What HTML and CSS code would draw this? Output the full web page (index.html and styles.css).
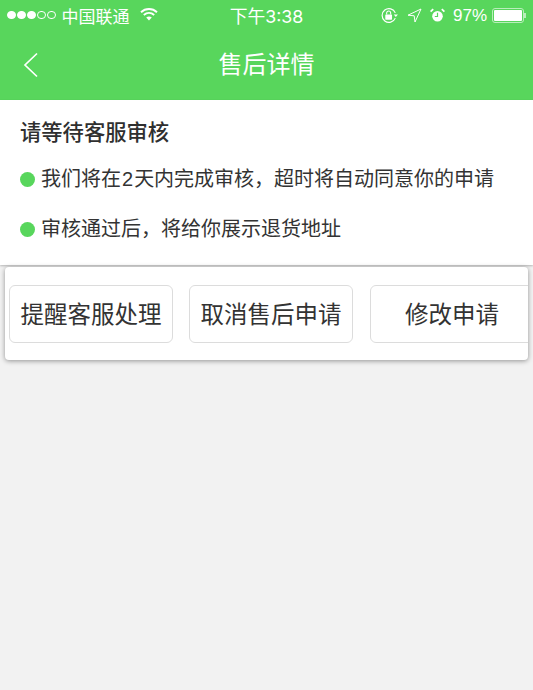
FILE: index.html
```html
<!DOCTYPE html>
<html lang="zh-CN">
<head>
<meta charset="utf-8">
<title>售后详情</title>
<link rel="stylesheet" href="styles.css">
</head>
<body>
<header class="top">
  <div class="status">
    <div class="status-left">
      <span class="dots"><i class="dot on"></i><i class="dot on"></i><i class="dot on"></i><i class="dot"></i><i class="dot"></i></span>
      <span class="carrier">中国联通</span>
      <svg class="wifi" width="18" height="14" viewBox="0 0 18 14"><path d="M1 5.200C5.600.9 12.400.9 17 5.200" fill="none" stroke="#fff" stroke-width="1.900"/><path d="M3.800 8C6.900 5.300 11.100 5.300 14.200 8" fill="none" stroke="#fff" stroke-width="1.900"/><path d="M6.200 10.500C7.900 9 10.100 9 11.800 10.500L9 13.500Z" fill="#fff"/></svg>
    </div>
    <div class="clock">下午3:38</div>
    <div class="status-right">
      <svg class="ic-lock" width="19" height="17" viewBox="0 0 18 16"><path d="M14.500 10.500A6.500 6.500 0 1 1 14.500 5.500" fill="none" stroke="#fff" stroke-width="1.100"/><path d="M13 7h4l-2 2.500z" fill="#fff"/><rect x="5" y="7" width="6.400" height="5" rx=".6" fill="#fff"/><path d="M6.300 7V5.600a1.900 1.900 0 0 1 3.800 0V7" fill="none" stroke="#fff" stroke-width="1"/></svg>
      <svg class="ic-loc" width="15" height="15" viewBox="0 0 15 15"><path d="M14 1 1 7.200l6.200.6.800 6.200z" fill="none" stroke="#fff" stroke-width="1" stroke-linejoin="round"/></svg>
      <svg class="ic-alarm" width="15" height="15" viewBox="0 0 15 15"><circle cx="7.500" cy="8.200" r="5.300" fill="#fff"/><path d="M7.500 4.800v3.700H4.800" fill="none" stroke="#58d65c" stroke-width="1.200"/><path d="M.6 3.600 3.200 1.200 M14.400 3.600 11.800 1.200" stroke="#fff" stroke-width="1.800"/></svg>
      <span class="pct">97%</span>
      <span class="battery"><span class="battery-fill"></span></span>
      <span class="battery-cap"></span>
    </div>
  </div>
  <nav class="nav">
    <svg class="back" width="16" height="26" viewBox="0 0 16 26"><path d="M14 1.500 2 13l12 11.500" fill="none" stroke="#fff" stroke-width="1.700"/></svg>
    <h1 class="nav-title">售后详情</h1>
  </nav>
</header>
<section class="info">
  <h2 class="info-title">请等待客服审核</h2>
  <p class="info-row"><i class="bullet"></i>我们将在<span class="num">2</span>天内完成审核，超时将自动同意你的申请</p>
  <p class="info-row"><i class="bullet"></i>审核通过后，将给你展示退货地址</p>
</section>
<section class="actions">
  <div class="action-track">
    <button class="btn">提醒客服处理</button>
    <button class="btn">取消售后申请</button>
    <button class="btn btn-last">修改申请</button>
  </div>
</section>
</body>
</html>
```

FILE: styles.css
```css
* { box-sizing: border-box; }
html, body { margin: 0; padding: 0; }
body {
  width: 533px;
  height: 690px;
  overflow: hidden;
  background: #f2f2f2;
  font-family: "Liberation Sans", "Noto Sans CJK SC", sans-serif;
  color: #333;
}
.top { background: #58d65c; color: #fff; height: 100px; }
.status {
  height: 30px;
  display: grid;
  grid-template-columns: 1fr auto 1fr;
  align-items: center;
  padding: 0 7px;
}
.status-left, .status-right { display: flex; align-items: center; }
.status-right { justify-content: flex-end; }
.dots { display: flex; gap: 1.500px; margin-right: 6px; }
.dot { width: 8.500px; height: 8.500px; border-radius: 50%; border: 1px solid #fff; }
.dot.on { background: #fff; }
.carrier { font-size: 17px; }
.wifi { margin: 0 0 2px 10px; }
.clock { font-family: Inter, "Noto Sans CJK SC", sans-serif; font-size: 17.800px; }
.ic-lock { margin-right: 8px; }
.ic-loc { margin-right: 8px; }
.ic-alarm { margin-right: 8px; }
.pct { font-size: 17px; margin-right: 5px; padding-top: 2px; }
.battery {
  width: 32px;
  height: 15px;
  border: 1px solid #b9eebb;
  border-radius: 3px;
  padding: 1px;
  display: block;
}
.battery-fill { display: block; height: 100%; background: #fff; border-radius: 1px; }
.battery-cap { width: 2px; height: 5px; background: #b9eebb; }
.nav { height: 70px; display: flex; align-items: center; justify-content: center; position: relative; }
.back { position: absolute; left: 23px; top: 22px; }
.nav-title { margin: 0; padding-bottom: 6px; font-size: 24px; font-weight: 400; }
.info { background: #fff; height: 165px; padding: 19px 20px 0; box-shadow: 0 1px 2px rgba(0,0,0,.25); }
.info-title { margin: 0 0 18px; font-size: 21.300px; line-height: 28px; font-weight: 500; color: #2f2f2f; }
.info-row { margin: 0 0 22px; display: flex; align-items: center; font-size: 20px; line-height: 28px; color: #333; }
.num { margin: 0 1px; }
.bullet { width: 15px; height: 15px; border-radius: 50%; background: #58d65c; margin-right: 6px; flex: none; }
.actions {
  margin: 2px 5px 0;
  height: 93px;
  background: #fff;
  border-radius: 4px;
  box-shadow: 0 1px 5px rgba(0,0,0,.4);
  overflow: hidden;
}
.action-track { display: flex; gap: 16px; padding: 18px 0 0 4px; }
.btn {
  flex: none;
  width: 164px;
  height: 58px;
  padding: 0 0 2px;
  background: #fff;
  border: 1px solid #dcdcdc;
  border-radius: 6px;
  font-family: inherit;
  font-size: 23.500px;
  color: #333;
}
.btn-last { width: 170px; margin-left: 1px; padding-right: 6px; }
```
